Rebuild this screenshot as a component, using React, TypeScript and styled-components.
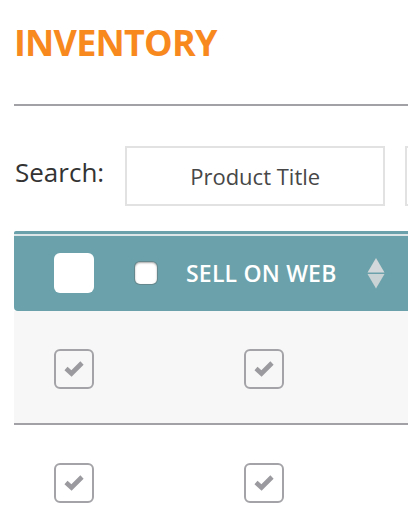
import styled, { createGlobalStyle } from 'styled-components';

const GlobalStyle = createGlobalStyle`
  html, body {
    margin: 0;
    padding: 0;
    background: #ffffff;
    overflow: hidden;
  }

  body {
    font-family: 'Open Sans', 'Liberation Sans', sans-serif;
  }
`;

const Page = styled.div`
  width: 760px;
  padding-left: 14px;
`;

const Title = styled.h1`
  margin: 0;
  padding-top: 25px;
  font-size: 36px;
  line-height: 36px;
  font-weight: 700;
  color: #f7891f;
  letter-spacing: -0.8px;
`;

const Divider = styled.hr`
  margin: 43px 0 0;
  border: 0;
  height: 2px;
  background: #a2a2a6;
`;

const SearchRow = styled.div`
  display: flex;
  align-items: flex-start;
  margin-top: 40px;
`;

const SearchLabel = styled.label`
  margin: 11px 0 0 1px;
  font-size: 26px;
  line-height: 30px;
  color: #333333;
`;

const SearchBox = styled.div<{ $width: number; $gap: number }>`
  box-sizing: border-box;
  width: ${(p) => p.$width}px;
  height: 60px;
  margin-left: ${(p) => p.$gap}px;
  border: 2px solid #e2e2e2;
  font-size: 22px;
  line-height: 56px;
  color: #474747;
  text-align: center;
`;

const Table = styled.div`
  margin-top: 25px;
`;

const HeaderRow = styled.div`
  display: flex;
  height: 77px;
  background: #6ba1aa;
  border-top: 3px solid #6ba1aa;
  box-shadow: inset 0 2px 0 #dfe6e8;
  border-radius: 2px 0 0 4px;
`;

const Cell = styled.div<{ $width: number }>`
  flex: 0 0 ${(p) => p.$width}px;
  display: flex;
  align-items: center;
  justify-content: center;
`;

const HeaderCell = styled.div<{ $width: number }>`
  flex: 0 0 ${(p) => p.$width}px;
  display: flex;
  align-items: center;
  padding-left: 1px;
`;

const BigBox = styled.div`
  width: 40px;
  height: 40px;
  margin-top: 1px;
  border-radius: 6px;
  background: #ffffff;
`;

const SmallBox = styled.div`
  width: 22px;
  height: 22px;
  margin-top: 1px;
  border-radius: 5px;
  background: #ffffff;
  box-shadow: 0 0 0 1px rgba(90, 90, 90, 0.35), inset 0 1px 2px rgba(0, 0, 0, 0.35);
`;

const HeaderText = styled.span`
  margin-left: 29px;
  font-size: 23px;
  font-weight: 600;
  letter-spacing: 0.2px;
  color: #ffffff;
`;

const SortIcon = styled.svg`
  margin-left: 30px;
  margin-top: 2px;
`;

const Row = styled.div<{ $shaded: boolean }>`
  display: flex;
  height: 112px;
  background: ${(p) => (p.$shaded ? '#f7f7f7' : '#ffffff')};
  border-bottom: 2px solid #a2a2a6;
`;

const CheckBox = styled.div`
  box-sizing: border-box;
  width: 40px;
  height: 40px;
  margin-top: 3px;
  border: 2px solid #a4a4a8;
  border-radius: 6px;
  display: flex;
  align-items: center;
  justify-content: center;
`;

const Check = () => (
  <svg width="20" height="17" viewBox="0 0 20 17">
    <polyline points="2,8.5 7.5,13.5 18,3" fill="none" stroke="#9b9b9f" strokeWidth="4.6" strokeLinecap="butt" strokeLinejoin="miter" />
  </svg>
);

const Sort = () => (
  <SortIcon width="18" height="31" viewBox="0 0 18 31">
    <polygon points="9,0 17.5,14.5 0.5,14.5" fill="#d3d9da" />
    <polygon points="0.5,16 17.5,16 9,30.5" fill="#c9d2d4" />
  </SortIcon>
);

const rows = [true, false];

export default function App() {
  return (
    <>
      <GlobalStyle />
      <Page>
        <Title>INVENTORY</Title>
        <Divider />
        <SearchRow>
          <SearchLabel>Search:</SearchLabel>
          <SearchBox $width={260} $gap={21}>Product Title</SearchBox>
          <SearchBox $width={260} $gap={20} />
        </SearchRow>
        <Table>
          <HeaderRow>
            <Cell $width={120}>
              <BigBox />
            </Cell>
            <HeaderCell $width={300}>
              <SmallBox />
              <HeaderText>SELL ON WEB</HeaderText>
              <Sort />
            </HeaderCell>
          </HeaderRow>
          {rows.map((shaded, i) => (
            <Row key={i} $shaded={shaded}>
              <Cell $width={120}>
                <CheckBox>
                  <Check />
                </CheckBox>
              </Cell>
              <Cell $width={260}>
                <CheckBox>
                  <Check />
                </CheckBox>
              </Cell>
            </Row>
          ))}
        </Table>
      </Page>
    </>
  );
}
